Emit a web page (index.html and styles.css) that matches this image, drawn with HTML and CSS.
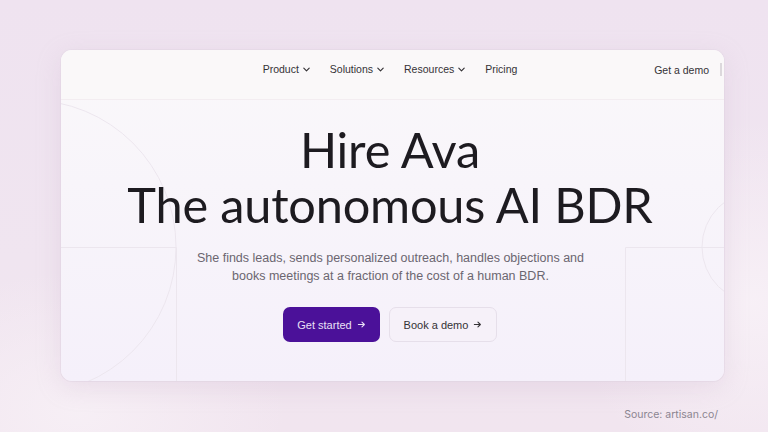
FILE: index.html
```html
<!DOCTYPE html>
<html lang="en">
<head>
<meta charset="utf-8">
<title>Hire Ava</title>
<link rel="stylesheet" href="styles.css">
</head>
<body>
<div class="stage">
  <div class="card">
    <svg class="deco" width="663" height="331" viewBox="0 0 663 331" aria-hidden="true">
      <circle cx="-32" cy="197" r="147" fill="none" stroke="#ece6ee" stroke-width="1"/>
      <path d="M0 197.5 H115.5 V331" fill="none" stroke="#ece6ee" stroke-width="1"/>
      <path d="M663 197.5 H564.5 V331" fill="none" stroke="#ece6ee" stroke-width="1"/>
      <circle cx="697" cy="197" r="56" fill="none" stroke="#ece6ee" stroke-width="1"/>
    </svg>
    <header class="nav">
      <div class="nav-side"></div>
      <nav class="nav-links">
        <span class="nav-item">Product <svg class="chev" viewBox="0 0 10 10"><path d="M2 3.5 L5 6.5 L8 3.5" fill="none" stroke="currentColor" stroke-width="1.3" stroke-linecap="round" stroke-linejoin="round"/></svg></span>
        <span class="nav-item">Solutions <svg class="chev" viewBox="0 0 10 10"><path d="M2 3.5 L5 6.5 L8 3.5" fill="none" stroke="currentColor" stroke-width="1.3" stroke-linecap="round" stroke-linejoin="round"/></svg></span>
        <span class="nav-item">Resources <svg class="chev" viewBox="0 0 10 10"><path d="M2 3.5 L5 6.5 L8 3.5" fill="none" stroke="currentColor" stroke-width="1.3" stroke-linecap="round" stroke-linejoin="round"/></svg></span>
        <span class="nav-item">Pricing</span>
      </nav>
      <div class="nav-side nav-right">
        <span class="nav-item">Get a demo</span>
        <span class="nav-edge"></span>
      </div>
    </header>
    <main class="hero">
      <h1 class="title">Hire Ava<br>The autonomous AI BDR</h1>
      <p class="lead">She finds leads, sends personalized outreach, handles objections and<br>books meetings at a fraction of the cost of a human BDR.</p>
      <div class="actions">
        <a class="btn btn-primary">Get started <svg class="arrow" viewBox="0 0 10 10"><path d="M1.5 5 H8.2 M5.5 2.3 L8.2 5 L5.5 7.7" fill="none" stroke="currentColor" stroke-width="1.2" stroke-linecap="round" stroke-linejoin="round"/></svg></a>
        <a class="btn btn-secondary">Book a demo <svg class="arrow" viewBox="0 0 10 10"><path d="M1.5 5 H8.2 M5.5 2.3 L8.2 5 L5.5 7.7" fill="none" stroke="currentColor" stroke-width="1.2" stroke-linecap="round" stroke-linejoin="round"/></svg></a>
      </div>
    </main>
  </div>
  <div class="source">Source: artisan.co/</div>
</div>
</body>
</html>
```
FILE: styles.css
```css
* { box-sizing: border-box; }
html, body { margin: 0; padding: 0; }
body {
  width: 768px;
  height: 432px;
  overflow: hidden;
  background:
    radial-gradient(ellipse 300px 200px at 10% 95%, rgba(247, 240, 246, 0.9), rgba(247, 240, 246, 0) 70%),
    radial-gradient(ellipse 260px 260px at 98% 70%, rgba(248, 241, 247, 0.9), rgba(248, 241, 247, 0) 70%),
    linear-gradient(180deg, #efe3f0 0%, #f0e5f0 60%, #f1e5ef 100%);
  font-family: "Liberation Sans", Arial, sans-serif;
}
.stage {
  padding: 50px 0 0 61px;
}
.card {
  position: relative;
  width: 663px;
  height: 331px;
  border-radius: 11px;
  background: linear-gradient(180deg, #faf8fa 0%, #f8f5fa 40%, #f5f0fa 100%);
  box-shadow: 0 6px 24px rgba(200, 170, 200, 0.25), 0 0 0 1px rgba(230, 220, 232, 0.6);
  overflow: hidden;
  display: flex;
  flex-direction: column;
}
.deco {
  position: absolute;
  left: 0;
  top: 0;
  width: 663px;
  height: 331px;
  pointer-events: none;
}
.nav {
  position: relative;
  height: 50px;
  flex: none;
  display: grid;
  grid-template-columns: 1fr auto 1fr;
  align-items: start;
  padding-top: 13px;
  background: #faf8f9;
  border-bottom: 1px solid #f3edf1;
}
.nav-links {
  display: flex;
  gap: 19px;
  align-items: center;
  padding-right: 5px;
}
.nav-item {
  font-size: 10.5px;
  line-height: 12px;
  color: #343236;
  display: inline-flex;
  align-items: center;
  gap: 3px;
  white-space: nowrap;
}
.chev { width: 9px; height: 9px; }
.nav-right {
  display: flex;
  justify-content: flex-end;
  align-items: center;
  gap: 11px;
}
.nav-edge {
  width: 2px;
  height: 13px;
  background: #dcd8dc;
  margin-right: 2px;
}
.hero {
  position: relative;
  display: flex;
  flex-direction: column;
  align-items: center;
  padding-top: 22px;
}
.title {
  margin: 0;
  font-family: Lato, "Open Sans", sans-serif;
  font-weight: 400;
  font-size: 48.7px;
  line-height: 55px;
  color: #1d1b20;
  text-align: center;
  letter-spacing: -0.2px;
  padding-right: 5px;
}
.lead {
  margin: 18px 0 0;
  font-size: 12.5px;
  line-height: 17.5px;
  color: #6b6670;
  text-align: center;
  padding-right: 4px;
}
.actions {
  display: flex;
  gap: 9px;
  margin-top: 22px;
  padding-right: 5px;
}
.btn {
  display: inline-flex;
  align-items: center;
  justify-content: center;
  gap: 5px;
  height: 35px;
  border-radius: 7px;
  font-size: 11px;
  text-decoration: none;
}
.btn-primary {
  width: 97px;
  background: #4b1199;
  color: #e9e0f6;
}
.btn-secondary {
  width: 108px;
  background: #f6f1f9;
  color: #343236;
  border: 1px solid #e6dfea;
}
.arrow { width: 9px; height: 9px; }
.source {
  width: 657px;
  margin-top: 27px;
  text-align: right;
  font-family: Inter, "Noto Sans", sans-serif;
  font-size: 10.5px;
  color: #8b8590;
}
```
